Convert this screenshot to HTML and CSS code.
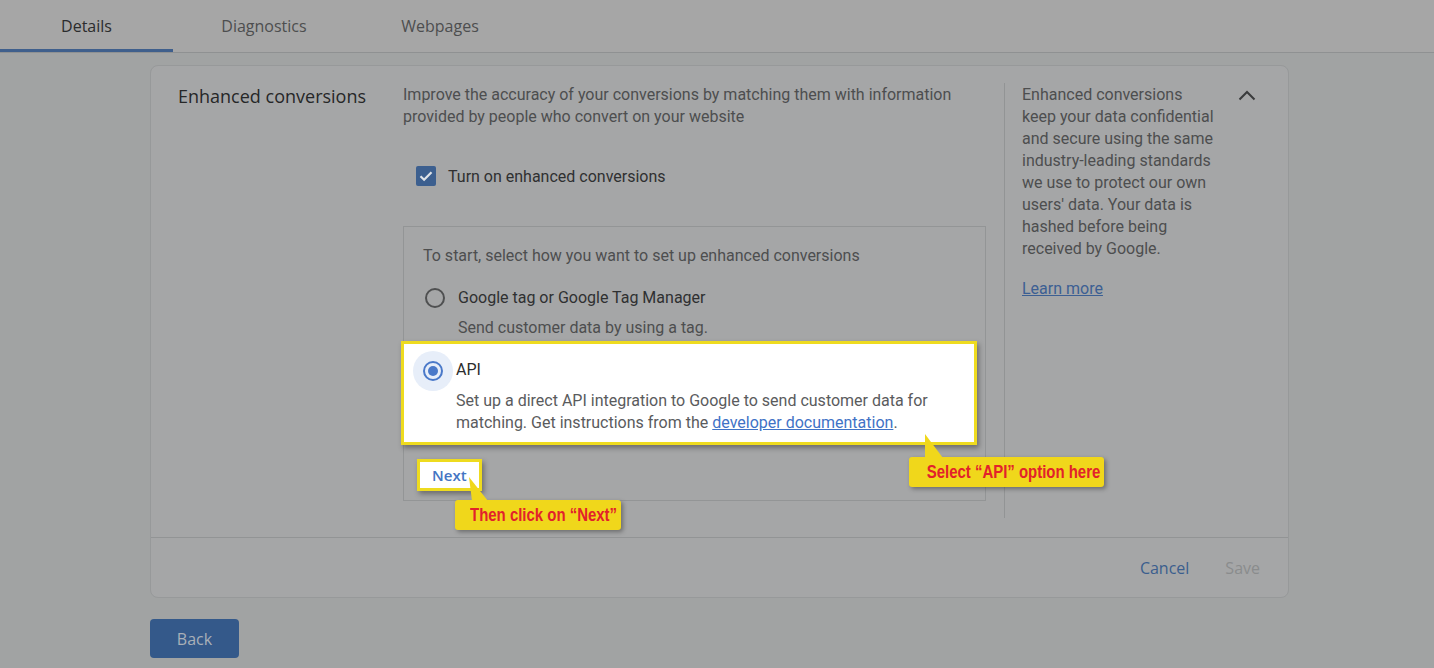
FILE: index.html
```html
<!DOCTYPE html>
<html lang="en">
<head>
    <meta charset="UTF-8">
    <meta name="viewport" content="width=device-width, initial-scale=1.0">
    <title>Enhanced conversions</title>
    <link rel="stylesheet" href="styles.css">
</head>
<body>
    <nav class="tabs">
        <a class="tab active">Details</a>
        <a class="tab">Diagnostics</a>
        <a class="tab">Webpages</a>
    </nav>

    <main class="page">
        <section class="card">
            <div class="card-body">
                <h2 class="card-title">Enhanced conversions</h2>

                <div class="setup">
                    <p class="intro">Improve the accuracy of your conversions by matching them with information provided by people who convert on your website</p>

                    <label class="check">
                        <span class="check-box">
                            <svg width="20" height="20" viewBox="0 0 20 20"><path d="M4.5 10.2l3.6 3.6 7.4-7.6" fill="none" stroke="#dfe3e8" stroke-width="2.2"/></svg>
                        </span>
                        Turn on enhanced conversions
                    </label>

                    <div class="method-box">
                        <p class="prompt">To start, select how you want to set up enhanced conversions</p>

                        <div class="option">
                            <div class="option-row">
                                <span class="radio"></span>
                                <span class="option-label">Google tag or Google Tag Manager</span>
                            </div>
                            <p class="option-desc">Send customer data by using a tag.</p>
                        </div>

                        <div class="option-api highlight">
                            <div class="option-row">
                                <span class="halo"><span class="radio radio-on"></span></span>
                                <span class="api-label">API</span>
                            </div>
                            <p class="api-desc">Set up a direct API integration to Google to send customer data for matching. Get instructions from the <a class="link">developer documentation</a>.</p>
                        </div>

                        <button class="next highlight">Next</button>
                    </div>
                </div>

                <aside class="info">
                    <p>Enhanced conversions keep your data confidential and secure using the same industry-leading standards we use to protect our own users' data. Your data is hashed before being received by Google.</p>
                    <a class="learn">Learn more</a>
                </aside>

                <button class="collapse">
                    <svg width="24" height="24" viewBox="0 0 24 24"><path d="M4.5 15.5l7.5-7.5 7.5 7.5" fill="none" stroke="#3a3b3c" stroke-width="2"/></svg>
                </button>
            </div>

            <div class="card-footer">
                <button class="text-btn">Cancel</button>
                <button class="text-btn disabled">Save</button>
            </div>
        </section>

        <button class="back">Back</button>
    </main>

    <!-- tutorial annotations -->
    <div class="callout callout-api">
        <svg class="pointer" width="20" height="24" viewBox="0 0 20 24"><polygon points="0,0 0,24 18,24" fill="#f0d71b"/></svg>
        <span class="callout-text">Select “API” option here</span>
    </div>
    <div class="callout callout-next">
        <svg class="pointer" width="20" height="24" viewBox="0 0 20 24"><polygon points="0,0 3,24 19,24" fill="#f0d71b"/></svg>
        <span class="callout-text">Then click on “Next”</span>
    </div>
</body>
</html>
```

FILE: styles.css
```css
body {
    margin: 0;
    background: #a1a3a3;
    font-family: Roboto, "Liberation Sans", sans-serif;
    color: #4b4c4d;
    position: relative;
    height: 668px;
    overflow: hidden;
}
p {
    margin: 0;
}
button {
    font: inherit;
    border: none;
    background: none;
    padding: 0;
    cursor: pointer;
}

/* tabs */
.tabs {
    display: flex;
    height: 52px;
    background: #a6a6a6;
    border-bottom: 1px solid #8f9192;
}
.tab {
    width: 176px;
    display: flex;
    align-items: center;
    justify-content: center;
    font-family: "Open Sans", sans-serif;
    font-size: 16px;
    color: #4d4e4f;
    box-sizing: border-box;
}
.tab.active {
    width: 173px;
    margin-right: 3px;
    color: #2b2c2d;
    border-bottom: 3px solid #3f5f8c;
    padding-top: 3px;
}

/* card */
.page {
    padding: 12px 0 0 150px;
}
.card {
    width: 1139px;
    box-sizing: border-box;
    background: #a5a6a7;
    border: 1px solid #97999a;
    border-radius: 8px;
}
.card-body {
    display: flex;
    align-items: stretch;
    padding: 17px 29px 19px 27px;
}
.card-title {
    width: 225px;
    flex: none;
    margin: 0;
    font-family: "Open Sans", sans-serif;
    font-weight: 400;
    font-size: 18px;
    line-height: 26px;
    color: #262728;
}
.setup {
    width: 583px;
    flex: none;
    padding-bottom: 17px;
}
.intro {
    padding-top: 1px;
    font-size: 16px;
    line-height: 22px;
    color: #4d4e4f;
}
.check {
    display: flex;
    align-items: center;
    gap: 12px;
    margin: 36px 0 0 13px;
    height: 24px;
    font-size: 16px;
    color: #2f3031;
}
.check-box {
    width: 20px;
    height: 20px;
    border-radius: 2px;
    background: #3c5f8f;
}
.check-box svg {
    display: block;
}

.method-box {
    margin-top: 38px;
    border: 1px solid #939596;
    padding: 18px 19px 9px;
}
.prompt {
    font-size: 16px;
    line-height: 22px;
    color: #4d4e4f;
}
.option {
    margin-top: 19px;
    padding-left: 2px;
}
.option-row {
    display: flex;
    align-items: center;
}
.option-label {
    margin-left: 13px;
    font-size: 16px;
    line-height: 24px;
    color: #2f3031;
}
.option-desc {
    margin: 7px 0 0 33px;
    font-size: 16px;
    line-height: 22px;
    color: #4d4e4f;
}
.radio {
    width: 20px;
    height: 20px;
    box-sizing: border-box;
    border-radius: 50%;
    border: 2px solid #4f5051;
    flex: none;
}

/* highlighted parts */
.highlight {
    position: relative;
    z-index: 2;
    background: #fff;
    border: 3px solid #eedb1f;
    box-shadow: 2px 3px 5px rgba(40, 40, 40, 0.45);
    box-sizing: border-box;
}
.option-api {
    width: 576px;
    margin: 2px 0 0 -22px;
    padding: 7px 10px 8px 9px;
}
.halo {
    width: 40px;
    height: 40px;
    border-radius: 50%;
    background: #e7eef9;
    display: flex;
    align-items: center;
    justify-content: center;
}
.radio-on {
    border-color: #4a79c9;
    position: relative;
}
.radio-on::after {
    content: "";
    position: absolute;
    left: 3px;
    top: 3px;
    width: 10px;
    height: 10px;
    border-radius: 50%;
    background: #4a79c9;
}
.api-label {
    margin-left: 3px;
    font-size: 16px;
    line-height: 24px;
    color: #2c2d2e;
    margin-top: -2px;
}
.api-desc {
    margin: -1px 0 0 43px;
    font-size: 16px;
    line-height: 22px;
    color: #5a5b5d;
}
.link {
    color: #3f72c6;
    text-decoration: underline;
}
.next {
    display: block;
    margin: 14px 0 0 -6px;
    width: 65px;
    height: 32px;
    padding: 0 0 0 12px;
    text-align: left;
    font-family: "Open Sans", sans-serif;
    font-weight: 600;
    font-size: 15px;
    color: #4475c3;
}

/* side info */
.info {
    margin-left: 18px;
    border-left: 1px solid #929495;
    padding-left: 17px;
    width: 196px;
    margin-right: 9px;
    flex: none;
    font-size: 16px;
    line-height: 22px;
    color: #4d4e4f;
}
.info p {
    padding-top: 1px;
}
.learn {
    display: inline-block;
    margin-top: 18px;
    color: #3c5f93;
    text-decoration: underline;
}
.collapse {
    margin-left: auto;
    width: 24px;
    height: 24px;
    margin-top: 1px;
}
.collapse svg {
    display: block;
}

.card-footer {
    display: flex;
    justify-content: flex-end;
    align-items: center;
    gap: 36px;
    height: 59px;
    padding-right: 28px;
    border-top: 1px solid #929495;
}
.text-btn {
    font-family: "Open Sans", sans-serif;
    font-weight: 500;
    font-size: 16px;
    color: #3b5e8e;
}
.text-btn.disabled {
    color: #8a8c8d;
}
.back {
    display: block;
    margin-top: 21px;
    width: 89px;
    height: 39px;
    border-radius: 4px;
    background: #34598a;
    font-family: "Open Sans", sans-serif;
    font-size: 16px;
    color: #a9b0b8;
}

/* callouts */
.callout {
    position: absolute;
    z-index: 3;
    height: 30px;
    box-sizing: border-box;
    background: #f0d71b;
    border-radius: 3px;
    box-shadow: 2px 2px 4px rgba(40, 40, 40, 0.45);
    color: #e2222b;
    font-family: "Liberation Sans", sans-serif;
    font-weight: bold;
    font-size: 18px;
    line-height: 30px;
    text-align: center;
    white-space: nowrap;
}
.callout-text {
    display: inline-block;
    transform: scaleX(0.83);
}
.pointer {
    position: absolute;
    bottom: 29px;
}
.callout-api {
    left: 909px;
    top: 457px;
    width: 195px;
}
.callout-api .pointer {
    left: 16px;
}
.callout-next {
    left: 455px;
    top: 500px;
    width: 166px;
}
.callout-next .pointer {
    left: 14px;
}
```
